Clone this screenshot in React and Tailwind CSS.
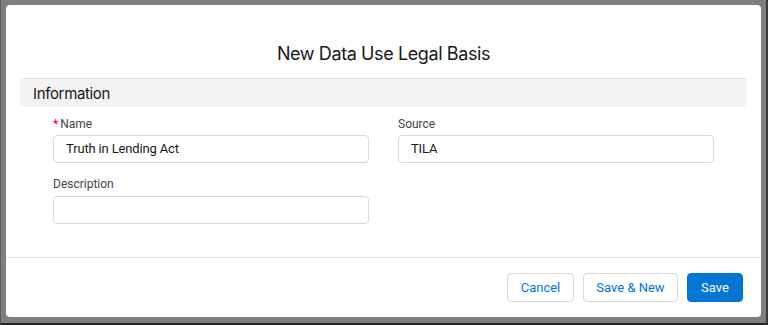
export default function App() {
  const inter = { fontFamily: "Inter, 'Noto Sans', Arial, sans-serif" };
  const roboto = { fontFamily: "Roboto, Arial, sans-serif" };
  return (
    <div
      className="w-[768px] h-[325px] box-border bg-[#7f7f7f] border-l-[1px] border-r-[2px] border-b-[2px] border-l-[#5a5a5a] border-r-[#3a3a3a] border-b-[#222222] pt-[5px] pl-[5px]"
      style={inter}
    >
      <div className="w-[755px] h-[312px] bg-white rounded-[4px] flex flex-col">
        <div className="h-[73px] pt-[36px] flex justify-center">
          <h1 className="text-[18px] leading-[25px] tracking-[-0.4px] text-[#181818] font-normal">New Data Use Legal Basis</h1>
        </div>
        <div className="mx-[14px] h-[29px] bg-[#f3f3f3] border-t border-[#e1e1e1] rounded-[4px] flex items-center pl-[13px] pt-[3px]">
          <span className="text-[15px] tracking-[-0.35px] text-[#181818]">Information</span>
        </div>
        <div className="flex-1 pl-[47px] pt-[8px] grid grid-cols-[316px_316px] gap-x-[29px] content-start" style={roboto}>
          <div>
            <label className="block text-[12px] leading-[18px] text-[#444444] mb-[2px]">
              <span className="text-[#ea001e] mr-[2px]">*</span>Name
            </label>
            <div className="h-[28px] border border-[#d8d8d8] rounded-[4px] flex items-center pl-[12px] text-[13px] tracking-[-0.15px] text-[#181818]">
              Truth in Lending Act
            </div>
          </div>
          <div>
            <label className="block text-[12px] leading-[18px] text-[#444444] mb-[2px]">Source</label>
            <div className="h-[28px] border border-[#d8d8d8] rounded-[4px] flex items-center pl-[12px] text-[13px] tracking-[-0.15px] text-[#181818]">
              TILA
            </div>
          </div>
          <div className="mt-[12px]">
            <label className="block text-[12px] leading-[18px] text-[#444444] mb-[3px]">Description</label>
            <div className="h-[28px] border border-[#d8d8d8] rounded-[4px]"></div>
          </div>
        </div>
        <div className="h-[60px] border-t border-[#e1e1e1] flex justify-end items-start pt-[15px] pr-[18px] gap-[9px]" style={roboto}>
          <button className="h-[29px] w-[67px] border border-[#d8d8d8] rounded-[4px] bg-white text-[13px] text-[#0176d3]">Cancel</button>
          <button className="h-[29px] w-[95px] border border-[#d8d8d8] rounded-[4px] bg-white text-[13px] text-[#0176d3]">Save &amp; New</button>
          <button className="h-[29px] w-[56px] border border-[#0176d3] rounded-[4px] bg-[#0176d3] text-[13px] text-white">Save</button>
        </div>
      </div>
    </div>
  );
}
